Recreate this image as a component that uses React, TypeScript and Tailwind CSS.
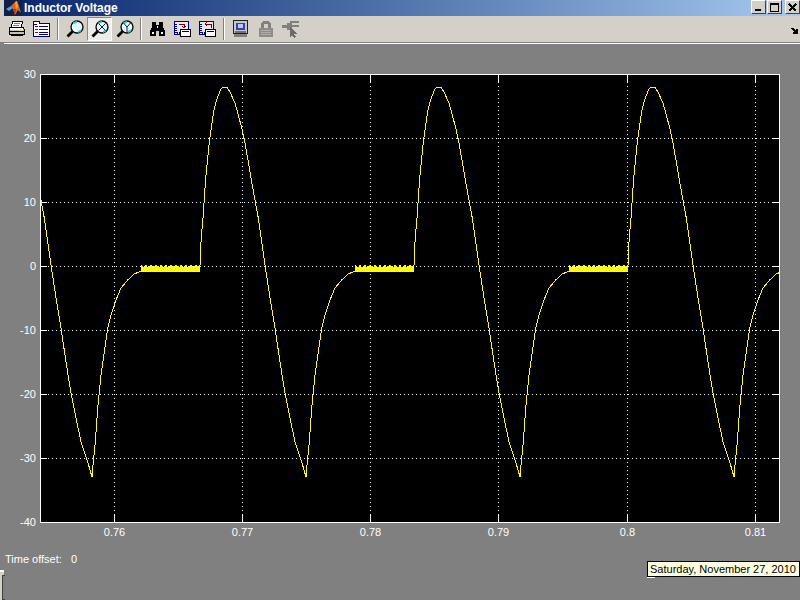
import { ReactNode } from "react";

// one period of the wave in page pixels, from the end of a flat part to the start of the next one
const wave: [number, number][] = [
  [199, 268], [200, 265], [201, 242], [201.7, 232], [203.3, 215], [204.3, 198], [206, 175], [207.7, 158],
  [209.3, 142], [211.7, 125], [214.3, 108], [217.7, 97], [221, 89], [223.3, 87], [226.7, 87], [230, 92],
  [235, 103], [238.3, 115], [241.7, 128], [245, 143], [248.3, 162], [251.7, 182], [255, 200], [258.3, 218],
  [261.7, 242], [265, 265], [270, 298], [275, 328], [280, 362], [285, 393], [290, 418], [295, 442],
  [301.7, 462], [306, 477], [307.3, 462], [309, 445], [310.3, 428], [312, 405], [315, 375], [318.3, 352],
  [321.7, 328], [325, 315], [330, 300], [335, 288], [341.7, 280], [348.3, 274], [355, 271],
];

function buildCurve() {
  const pts: string[] = [];
  [-214, 0, 214, 428].forEach((dx) => {
    wave.forEach(([x, y]) => pts.push(`${x + dx},${y}`));
    for (let x = 355; x <= 413 && dx < 428; x++) {
      const top = (x * 7) % 5 === 0 ? 265 : (x * 3) % 4 === 0 ? 266 : 267;
      pts.push(`${x + dx},${top}`, `${x + dx},272`);
    }
  });
  return pts.join(" ");
}

const xTicks = [
  { x: 114.5, label: "0.76" },
  { x: 242.5, label: "0.77" },
  { x: 370.5, label: "0.78" },
  { x: 498.5, label: "0.79" },
  { x: 627.5, label: "0.8" },
  { x: 755.5, label: "0.81" },
];
const yTicks = [
  { y: 74, label: "30" },
  { y: 138, label: "20" },
  { y: 202, label: "10" },
  { y: 266, label: "0" },
  { y: 330, label: "-10" },
  { y: 394, label: "-20" },
  { y: 458, label: "-30" },
  { y: 522, label: "-40" },
];

function Plot() {
  return (
    <div className="relative ml-[40px] mt-[30px] w-[740px] h-[449px]">
      <svg width="740" height="449" viewBox="40 74 740 449" shapeRendering="crispEdges" className="block bg-black">
        {yTicks.slice(1, -1).map((t) => (
          <g key={t.y}>
            <line x1="40" x2="780" y1={t.y + 0.5} y2={t.y + 0.5} stroke="#fff" strokeDasharray="1 3" />
            <line x1="40" x2="47" y1={t.y + 0.5} y2={t.y + 0.5} stroke="#fff" />
            <line x1="772" x2="780" y1={t.y + 0.5} y2={t.y + 0.5} stroke="#fff" />
          </g>
        ))}
        {xTicks.map((t) => (
          <g key={t.x}>
            <line y1="74" y2="523" x1={t.x} x2={t.x} stroke="#fff" strokeDasharray="1 3" />
            <line y1="74" y2="82" x1={t.x} x2={t.x} stroke="#fff" />
            <line y1="514" y2="523" x1={t.x} x2={t.x} stroke="#fff" />
          </g>
        ))}
        <polyline points={buildCurve()} fill="none" stroke="#ffff00" strokeWidth="1" />
        <rect x="40.5" y="74.5" width="739" height="448" fill="none" stroke="#fff" />
      </svg>
      {yTicks.map((t) => (
        <span key={t.label} style={{ top: t.y - 74 - 7 }} className="absolute right-[744px] text-[11px] leading-[14px] text-white">
          {t.label}
        </span>
      ))}
      {xTicks.map((t) => (
        <span key={t.label} style={{ left: t.x - 40 }} className="absolute top-[451px] -translate-x-1/2 text-[11px] leading-[14px] text-white">
          {t.label}
        </span>
      ))}
    </div>
  );
}

function MatlabLogo() {
  return (
    <svg width="18" height="16" viewBox="0 0 18 16" className="shrink-0">
      <rect width="18" height="16" fill="#10204a" />
      <path d="M2 9 L7 6 L9 8 L5 11 Z" fill="#5aa0c8" />
      <path d="M7 6 L11 2 L13 1 L15 6 L17 13 L14 10 L11 15 L9 9 Z" fill="#e0651c" />
      <path d="M11 2 L13 1 L14 7 L12 9 Z" fill="#f6a23c" />
      <path d="M9 9 L12 9 L11 15 Z" fill="#b83a10" />
    </svg>
  );
}

function WinButton({ children, className }: { children: ReactNode; className?: string }) {
  return (
    <div className={`w-[15px] h-[14px] bg-[#d4d0c8] border-t border-l border-t-white border-l-white border-r border-b border-r-[#404040] border-b-[#404040] flex items-center justify-center ${className ?? ""}`}>
      {children}
    </div>
  );
}

function TitleBar() {
  return (
    <div className="h-4 flex items-start bg-[#d4d0c8]">
      <div className="ml-1 flex-1 h-4 flex items-center bg-linear-to-r from-[#0a246a] to-[#a6caf0]">
        <MatlabLogo />
        <span className="ml-[2px] text-[12px] leading-4 font-bold text-white">Inductor Voltage</span>
        <div className="ml-auto flex items-start self-start">
          <WinButton>
            <div className="w-[6px] h-[2px] bg-black mt-[6px] -ml-[1px]" />
          </WinButton>
          <WinButton className="ml-px">
            <div className="w-[9px] h-[9px] border border-black border-t-2" />
          </WinButton>
          <WinButton className="ml-[3px]">
            <svg width="9" height="9" viewBox="0 0 9 9" shapeRendering="crispEdges">
              <path d="M1 1 L8 8 M8 1 L1 8" stroke="#000" strokeWidth="1.6" />
            </svg>
          </WinButton>
        </div>
      </div>
    </div>
  );
}

function Printer() {
  return (
    <svg width="17" height="16" viewBox="0 0 17 16" shapeRendering="crispEdges">
      <path d="M5 0 H15 L13 6 H3 Z" fill="#fff" stroke="#000" />
      <path d="M6 2 H12 M5 4 H11" stroke="#808080" />
      <path d="M1 6 H15 L16 8 V13 H1 V7 Z" fill="#c0c0c0" stroke="#000" />
      <rect x="2" y="7" width="13" height="2" fill="#fff" />
      <rect x="11" y="8" width="3" height="2" fill="#ffff00" />
      <rect x="3" y="13" width="12" height="2" fill="#000" />
      <rect x="1" y="10" width="15" height="1" fill="#000" />
    </svg>
  );
}

function PropertyDoc() {
  return (
    <svg width="17" height="16" viewBox="0 0 17 16" shapeRendering="crispEdges">
      <path d="M0.5 0.5 H6.5 V2.5 H16.5 V15.5 H0.5 Z" fill="#fff" stroke="#000080" />
      <rect x="1" y="3" width="3" height="1" fill="#000080" />
      <rect x="2" y="5" width="3" height="1" fill="#a00000" />
      <rect x="2" y="8" width="3" height="1" fill="#a00000" />
      <rect x="2" y="11" width="3" height="1" fill="#a00000" />
      <rect x="6" y="5" width="9" height="1" fill="#000080" />
      <rect x="6" y="8" width="9" height="1" fill="#000080" />
      <rect x="6" y="11" width="9" height="1" fill="#000080" />
      <rect x="6" y="13" width="9" height="1" fill="#000080" />
    </svg>
  );
}

function Magnifier({ mark }: { mark?: "x" | "y" }) {
  return (
    <svg width="18" height="18" viewBox="0 0 18 18">
      <circle cx="11" cy="7" r="6" fill="#e6fbfb" stroke="#000" strokeWidth="1.3" />
      <path d="M7.5 3.5 A5 5 0 0 1 11 2" stroke="#30d0d0" strokeWidth="1.8" fill="none" />
      <path d="M15 10 A5 5 0 0 1 12 12" stroke="#30d0d0" strokeWidth="1.8" fill="none" />
      {mark === "x" && <path d="M7.5 3.5 L14.5 10.5 M14.5 3.5 L7.5 10.5" stroke="#101860" strokeWidth="1" />}
      {mark === "y" && <path d="M7.5 3 L11 7 L14.5 3 M11 7 V12.5" stroke="#101860" strokeWidth="1" fill="none" />}
      <path d="M6.5 11.5 L1.5 16.5" stroke="#000" strokeWidth="2.8" />
    </svg>
  );
}

function Binoculars() {
  return (
    <svg width="17" height="16" viewBox="0 0 17 16" shapeRendering="crispEdges">
      <path d="M3 1 H7 V4 H10 V1 H14 V6 L16 10 V15 H10 V10 H7 V15 H1 V10 L3 6 Z" fill="#000" />
      <rect x="3" y="11" width="2" height="2" fill="#fff" />
      <rect x="12" y="11" width="2" height="2" fill="#fff" />
      <rect x="8" y="5" width="1" height="2" fill="#fff" />
    </svg>
  );
}

function ChartArrow({ back }: { back?: boolean }) {
  return (
    <svg width="17" height="16" viewBox="0 0 17 16" shapeRendering="crispEdges">
      <rect x="0.5" y="0.5" width="14" height="13" fill="#dfe6f4" stroke="#000080" />
      <path d="M1 3 H3 M1 5 H3 M1 7 H3 M1 9 H3 M1 11 H3 M3 13 V11 M5 13 V11 M7 13 V11" stroke="#000080" />
      {back ? (
        <path d="M12 7 V3 H6 M8 1 L6 3 L8 5" stroke="#800000" fill="none" />
      ) : (
        <path d="M5 3 H10 V7 M8 5 L10 7 L12 5" stroke="#800000" fill="none" />
      )}
      <rect x="6.5" y="8.5" width="10" height="7" fill="#fff" stroke="#000" />
      <rect x="8" y="10" width="7" height="1" fill="#000" />
    </svg>
  );
}

function Monitor() {
  return (
    <svg width="15" height="18" viewBox="0 0 15 18" shapeRendering="crispEdges">
      <rect x="0.5" y="0.5" width="14" height="13" fill="#c8c8c8" stroke="#202020" />
      <rect x="3" y="3" width="9" height="7" fill="#3040c0" />
      <rect x="5" y="4" width="5" height="4" fill="#b8c8f0" />
      <rect x="2" y="11" width="11" height="2" fill="#707070" />
      <rect x="1" y="14" width="13" height="3" fill="#808080" />
    </svg>
  );
}

function Lock() {
  return (
    <svg width="14" height="16" viewBox="0 0 14 16" shapeRendering="crispEdges">
      <path d="M3.5 7 V3 L5 1.5 H9 L10.5 3 V7" fill="none" stroke="#808080" strokeWidth="2.4" />
      <rect x="0" y="7" width="14" height="9" fill="#8c8c8c" />
      <path d="M2 9 H12 M2 11 H12 M2 13 H12" stroke="#b0aca6" />
    </svg>
  );
}

function CursorIcon() {
  return (
    <svg width="17" height="17" viewBox="0 0 17 17" shapeRendering="crispEdges">
      <path d="M0 4 H5 V2 H8 V0 H17 V2 H10 V4 H17 V6 H10 V9 H5 V7 H0 Z" fill="#808080" />
      <path d="M8 6 L8 16 L10 14 L12 17 L14 16 L12 13 L15 13 Z" fill="#6c6c6c" />
    </svg>
  );
}

function ToolBtn({ children, pressed }: { children: ReactNode; pressed?: boolean }) {
  return (
    <div className={`w-[25px] h-6 flex items-center justify-center ${pressed ? "bg-[#eeece8] border border-t-[#8c8a84] border-l-[#8c8a84] border-r-white border-b-white" : ""}`}>
      {children}
    </div>
  );
}

function Sep() {
  return <div className="mx-[3px] w-px h-[22px] bg-[#808080] border-r border-r-white box-content" />;
}

function Toolbar() {
  return (
    <div className="h-[26px] flex items-center pl-1 bg-[#d4d0c8] border-b border-b-[#808080] box-content">
      <ToolBtn><Printer /></ToolBtn>
      <ToolBtn><PropertyDoc /></ToolBtn>
      <Sep />
      <ToolBtn><Magnifier /></ToolBtn>
      <ToolBtn pressed><Magnifier mark="x" /></ToolBtn>
      <ToolBtn><Magnifier mark="y" /></ToolBtn>
      <Sep />
      <ToolBtn><Binoculars /></ToolBtn>
      <ToolBtn><ChartArrow /></ToolBtn>
      <ToolBtn><ChartArrow back /></ToolBtn>
      <Sep />
      <ToolBtn><Monitor /></ToolBtn>
      <ToolBtn><Lock /></ToolBtn>
      <ToolBtn><CursorIcon /></ToolBtn>
      <svg width="8" height="6" viewBox="0 0 8 6" shapeRendering="crispEdges" className="ml-auto mr-[1px] mt-[3px]">
        <path d="M0 0 H3 V1 H4 V2 H5 V1 H7 V6 H2 V4 H3 V3 H2 V2 H1 V1 H0 Z" fill="#000" />
      </svg>
    </div>
  );
}

export default function App() {
  return (
    <div className="relative w-[800px] h-[600px] overflow-hidden flex flex-col bg-[#808080] font-['Liberation_Sans',sans-serif]">
      <TitleBar />
      <Toolbar />
      <div className="h-px bg-white ml-1" />
      <Plot />
      <div className="ml-[5px] mt-[29px] flex text-[11px] leading-[14px] text-white">
        <span className="w-[66px]">Time offset:</span>
        <span>0</span>
      </div>
      <div className="absolute left-[647px] top-[561px] w-[153px] h-[16px] bg-[#ffffe1] border border-black text-[11px] leading-[14px] pl-[2px] text-black whitespace-nowrap">
        Saturday, November 27, 2010
      </div>
      <div className="absolute left-[647px] top-[577px] w-2 h-px bg-white" />
      <div className="absolute left-0 top-[570px] w-1 h-[30px] bg-[#d4d0c8] border-t-2 border-t-white" />
      <div className="absolute left-[2px] top-[575px] w-[3px] h-[25px] bg-[#808080] border border-r-0 border-[#404040]" />
    </div>
  );
}
